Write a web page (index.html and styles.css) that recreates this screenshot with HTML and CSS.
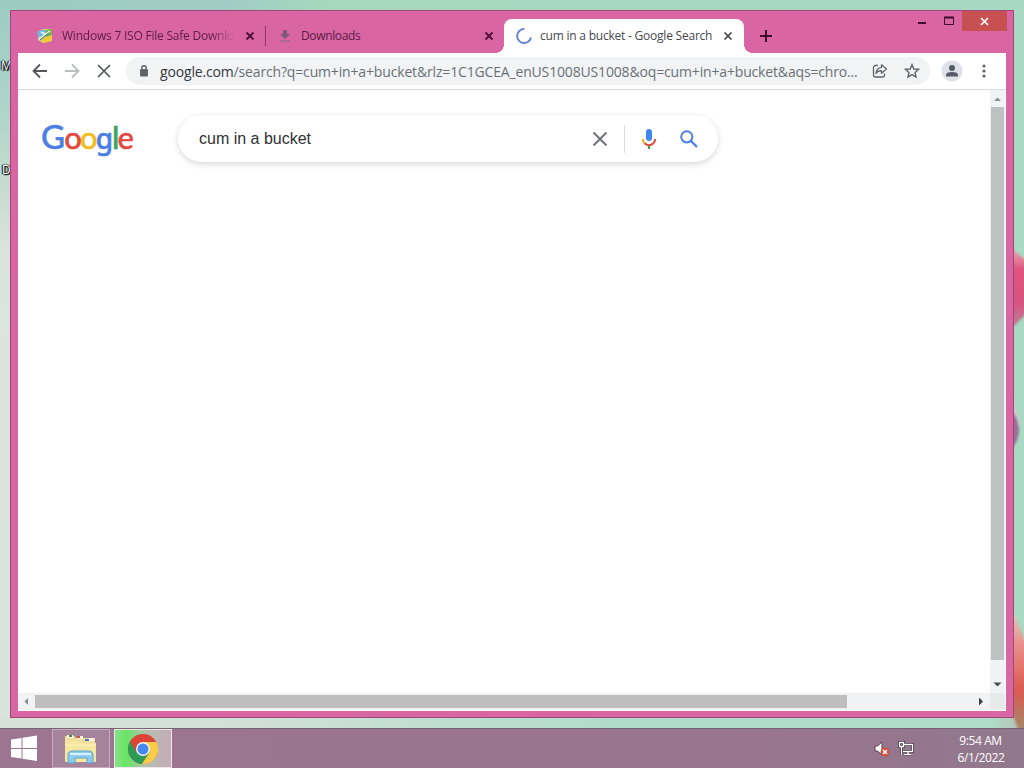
FILE: index.html
```html
<!DOCTYPE html>
<html lang="en">
<head>
    <meta charset="UTF-8" />
    <meta name="viewport" content="width=device-width, initial-scale=1.0" />
    <title>cum in a bucket - Google Search</title>
    <link rel="stylesheet" href="styles.css">
</head>
<body>
    <div class="desktop">
        <svg class="wallpaper" width="30" height="728" viewBox="0 0 30 728">
            <defs>
                <linearGradient id="petal" x1="0" y1="0" x2="0" y2="1">
                    <stop offset="0" stop-color="#e9b5b5"/>
                    <stop offset=".3" stop-color="#e0527f"/>
                    <stop offset=".7" stop-color="#d8527f"/>
                    <stop offset="1" stop-color="#b98096"/>
                </linearGradient>
                <linearGradient id="rose" x1="0" y1="0" x2="0" y2="1">
                    <stop offset="0" stop-color="#dcd5c8"/>
                    <stop offset=".3" stop-color="#ea8f8c"/>
                    <stop offset=".65" stop-color="#dc5a50"/>
                    <stop offset="1" stop-color="#9c8f6c"/>
                </linearGradient>
                <filter id="soft"><feGaussianBlur stdDeviation="1.2"/></filter>
            </defs>
            <g filter="url(#soft)">
                <path d="M16 246 Q24 254 34 262 V312 L20 326 H16Z" fill="url(#petal)"/>
                <path d="M18 400 Q25 410 27 425 H18Z" fill="#c4cfc8"/>
                <path d="M18 412 Q25 418 25 432 Q23 444 18 448Z" fill="#9a6f98"/>
                <path d="M16 606 Q24 620 34 650 V735 H26 L18 712Z" fill="url(#rose)"/>
            </g>
        </svg>
        <span class="icon-label label-one">M</span>
        <span class="icon-label label-two">D</span>

        <div class="window">
            <div class="window-buttons">
                <span class="win-btn"><svg width="10" height="10"><path d="M1 7H9" stroke="#3c0a2a" stroke-width="2"/></svg></span>
                <span class="win-btn"><svg width="12" height="10"><path d="M1.500 1V8.500H10.500V1" fill="none" stroke="#3c0a2a"/><path d="M1 1.500H11" stroke="#3c0a2a" stroke-width="2"/></svg></span>
                <span class="win-close"><svg width="9" height="9"><path d="M1 1L8 8M8 1L1 8" stroke="#fff" stroke-width="1.700"/></svg></span>
            </div>

            <div class="tabs">
                <div class="tab tab-first">
                    <svg class="favicon" width="16" height="16" viewBox="0 0 16 16">
                        <path d="M1 4Q5 0 12 1L15 3V13L6 15L1 12Z" fill="#d9d36a"/>
                        <path d="M0 4Q4 1 10 2L7 9L2 11Z" fill="#6fb8dd"/>
                        <path d="M6 8L14 6V13L7 15Z" fill="#f1c832"/>
                        <path d="M9 2L15 1V7L9 9Z" fill="#72b54c"/>
                        <path d="M2 11L13 3M4 4L8 6" stroke="#f8f8e4" stroke-width="1.500"/>
                        <path d="M3 12L12 5" stroke="#2d70a0"/>
                    </svg>
                    <span class="tab-title fade">Windows 7 ISO File Safe Downlo</span>
                    <svg class="tab-close" width="10" height="10"><path d="M1.500 1.500L8.500 8.500M8.500 1.500L1.500 8.500" stroke="#4a1238" stroke-width="1.800"/></svg>
                </div>
                <div class="tab tab-second">
                    <svg class="favicon" width="12" height="14" viewBox="0 0 12 14"><path d="M4 1H8V5H11L6 10L1 5H4Z" fill="#7c5a80"/><path d="M1 12H11" stroke="#9a6a94" stroke-width="1.500"/></svg>
                    <span class="tab-title downloads">Downloads</span>
                    <svg class="tab-close" width="10" height="10"><path d="M1.500 1.500L8.500 8.500M8.500 1.500L1.500 8.500" stroke="#4a1238" stroke-width="1.800"/></svg>
                </div>
                <div class="tab tab-active">
                    <svg class="favicon" width="16" height="16" viewBox="0 0 16 16"><path d="M8.500 1A7 7 0 1 0 15 9.500" fill="none" stroke="#6685d4" stroke-width="2"/></svg>
                    <span class="tab-title">cum in a bucket - Google Search</span>
                    <svg class="tab-close" width="10" height="10"><path d="M1.500 1.500L8.500 8.500M8.500 1.500L1.500 8.500" stroke="#3c4043" stroke-width="1.600"/></svg>
                </div>
                <svg class="new-tab" width="12" height="12"><path d="M6 0V12M0 6H12" stroke="#3c0a2a" stroke-width="2"/></svg>
            </div>

            <div class="client">
                <div class="toolbar">
                    <svg class="nav" width="16" height="16"><path d="M15 8H2M8 1.500L1.500 8L8 14.500" fill="none" stroke="#53565a" stroke-width="1.800"/></svg>
                    <svg class="nav" width="16" height="16"><path d="M1 8H14M8 1.500L14.500 8L8 14.500" fill="none" stroke="#babcbe" stroke-width="1.800"/></svg>
                    <svg class="nav" width="16" height="16"><path d="M2 2L14 14M14 2L2 14" stroke="#53565a" stroke-width="1.700"/></svg>
                    <div class="omnibox">
                        <svg width="10" height="12"><rect x="1" y="4" width="8" height="7.500" rx="1" fill="#5f6368"/><path d="M2.800 5V3A2.200 2.200 0 0 1 7.200 3V5" fill="none" stroke="#5f6368" stroke-width="1.400"/></svg>
                        <span class="url"><b>google.com</b>/search?q=cum+in+a+bucket&amp;rlz=1C1GCEA_enUS1008US1008&amp;oq=cum+in+a+bucket&amp;aqs=chro...</span>
                        <svg class="share" width="16" height="16" viewBox="0 0 16 16" fill="none" stroke="#5f6368" stroke-width="1.300"><path d="M6 2.500H3.500A2 2 0 0 0 1.500 4.500V12A2 2 0 0 0 3.500 14H10.500A2 2 0 0 0 12.500 12V10.500"/><path d="M9.500 1.800L14.500 6L9.500 10.200V7.800Q6 7.500 4 10.500Q4.500 5 9.500 4.300Z" stroke-linejoin="round"/></svg>
                        <svg width="16" height="16" viewBox="0 0 16 16"><path d="M8 1.700L9.800 6L14.500 6.400L11 9.500L12 14L8 11.600L4 14L5 9.500L1.500 6.400L6.200 6Z" fill="none" stroke="#5f6368" stroke-width="1.400"/></svg>
                    </div>
                    <svg class="avatar" width="22" height="22"><circle cx="11" cy="11" r="10.500" fill="#dfe1e8"/><circle cx="11" cy="8" r="3" fill="#565b68"/><path d="M5 16.500V15Q5 12 11 12T17 15V16.500Z" fill="#565b68"/></svg>
                    <svg class="menu" width="4" height="14" fill="#5f6368"><circle cx="2" cy="2" r="1.600"/><circle cx="2" cy="7" r="1.600"/><circle cx="2" cy="12" r="1.600"/></svg>
                </div>

                <div class="viewport">
                    <div class="page">
                        <div class="logo"><span class="blue big">G</span><span class="red">o</span><span class="yellow">o</span><span class="blue tail">g</span><span class="green">l</span><span class="red">e</span></div>
                        <div class="search-box">
                            <span class="query">cum in a bucket</span>
                            <svg width="16" height="16"><path d="M1.500 1.500L14.500 14.500M14.500 1.500L1.500 14.500" stroke="#70757a" stroke-width="2"/></svg>
                            <span class="divider"></span>
                            <svg class="mic" width="16" height="20" viewBox="0 0 16 20">
                                <rect x="5" y="0" width="6" height="12" rx="3" fill="#4285f4"/>
                                <path d="M7 16H9V20H7Z" fill="#34a853"/>
                                <path d="M1.700 10Q2 12.500 3.700 14.300" fill="none" stroke="#f4b400" stroke-width="2"/>
                                <path d="M3.600 14.200Q8 18.200 12.400 14.200Q14 12.500 14.300 10" fill="none" stroke="#dc4a3b" stroke-width="2"/>
                            </svg>
                            <svg width="18" height="18" viewBox="0 0 18 18"><circle cx="6.800" cy="6.800" r="5.600" fill="none" stroke="#4a7fe6" stroke-width="2"/><path d="M11 11L17 17" stroke="#4a7fe6" stroke-width="2.300"/></svg>
                        </div>
                    </div>
                    <div class="scroll-y">
                        <svg width="15" height="17"><path d="M4 11L7.500 7.500L11 11Z" fill="#8c8c8c"/></svg>
                        <span class="thumb-y"></span>
                        <svg class="arrow-down" width="15" height="17"><path d="M3.500 6.500H11.500L7.500 10.500Z" fill="#4a4a4a"/></svg>
                    </div>
                    <div class="scroll-x">
                        <svg width="17" height="15"><path d="M10 4V11L6.500 7.500Z" fill="#8c8c8c"/></svg>
                        <span class="thumb-x"></span>
                        <svg class="arrow-right" width="17" height="15"><path d="M7 3.500V11.500L11 7.500Z" fill="#3c3c3c"/></svg>
                    </div>
                    <div class="corner"></div>
                </div>
            </div>
        </div>
    </div>

    <div class="taskbar">
        <svg class="start" width="28" height="28" viewBox="0 0 28 28" fill="#fff"><path d="M1 4.500L11.500 3V13H1ZM12.500 2.800L27 0.500V13H12.500ZM1 14H11.500V23.500L1 22ZM12.500 14H27V26L12.500 23.800Z"/></svg>
        <div class="task">
            <svg width="34" height="32" viewBox="0 0 34 32">
                <path d="M1 3H10L12 5H31V28H1Z" fill="#f0dda0"/>
                <path d="M3 2H9V5H3ZM14 3H19V6H14ZM24 5H30V8H24Z" fill="#f8f4e4"/>
                <path d="M5 3H8" stroke="#3f8d55" stroke-width="2"/>
                <path d="M13 4H16" stroke="#c35b3a" stroke-width="2"/>
                <path d="M21 7H25" stroke="#4a78b8" stroke-width="2"/>
                <path d="M1 8H17L19 10H32V29H1Z" fill="#f6e69f"/>
                <path d="M1 12H32" stroke="#fff3bd"/>
                <path d="M4 30V22Q4 18 9 18H25Q29 18 29 22V30H23V25H11V30Z" fill="#8ccbed" stroke="#5ba5d2"/>
                <path d="M6 21H27" stroke="#d9f2ff" stroke-width="2"/>
            </svg>
        </div>
        <div class="task task-active">
            <svg width="30" height="30" viewBox="0 0 30 30">
                <circle cx="15" cy="15" r="15" fill="#db4437"/>
                <path d="M2 7.500A15 15 0 0 0 14 30L21.500 18.500L8.500 18.500Z" fill="#2b9b55"/>
                <path d="M15 8H28.300A15 15 0 0 1 14 30L21.500 18.500Z" fill="#fbcc45"/>
                <circle cx="15" cy="15" r="7" fill="#f3f3f3"/>
                <circle cx="15" cy="15" r="5.500" fill="#4688ef"/>
            </svg>
        </div>
        <div class="tray">
            <svg width="16" height="16" viewBox="0 0 16 16">
                <path d="M1 5H3.500L8 1V14L3.500 10H1Z" fill="#fff" stroke="#5b3f53"/>
                <circle cx="11" cy="11" r="4.500" fill="#d64b42"/>
                <path d="M9 9L13 13M13 9L9 13" stroke="#fff" stroke-width="1.500"/>
            </svg>
            <svg width="16" height="16" viewBox="0 0 16 16" fill="none">
                <path d="M6 3.500H14.500V10.500H5M10 11V13.500M6 13.500H13M1.500 1.500H5.500V5.500H1.500ZM3.500 6V14" stroke="#463344" stroke-width="3"/>
                <path d="M6 3.500H14.500V10.500H5M10 11V13.500M6 13.500H13M1.500 1.500H5.500V5.500H1.500ZM3.500 6V14" stroke="#fff" stroke-width="1.300"/>
            </svg>
            <div class="clock"><span class="time">9:54 AM</span><span class="date">6/1/2022</span></div>
        </div>
    </div>
</body>
</html>
```
FILE: styles.css
```css
html, body {
    height: 100%;
    margin: 0;
    overflow: hidden;
}

body {
    display: flex;
    flex-direction: column;
    font-family: "Open Sans", "Noto Sans", sans-serif;
}

svg, span {
    flex-shrink: 0;
}

.desktop {
    position: relative;
    height: 728px;
    flex-shrink: 0;
    background:
        linear-gradient(90deg, #d6e1da 0, #d0dfd7 25%, #b0dccb 60%, #aedbca 97%, #b9bdb0) 0 718px / 100% 10px no-repeat,
        linear-gradient(90deg, #9ccbc2 0, #a0cbc5 22%, #a6d8bd 32%, #a9d8c2) 0 0 / 100% 10px no-repeat,
        linear-gradient(#9ccbc2 0, #aed5c9 15%, #c3dacd 24%, #d9e4dd 35%, #dce3dd 50%, #d9e2dc) 0 0 / 12px 100% no-repeat,
        #a8d9c2;
}

.wallpaper {
    position: absolute;
    right: 0;
    top: 0;
}

.icon-label {
    position: absolute;
    left: 1px;
    font-size: 12px;
    line-height: 14px;
    color: #fff;
    text-shadow: 0 0 2px #000, 1px 1px 1px #000, -1px 0 1px #000, 1px 0 1px #000;
}

.label-one { top: 59px; }
.label-two { top: 163px; left: 2px; }

.window {
    position: absolute;
    left: 10px;
    top: 10px;
    width: 1004px;
    height: 708px;
    box-sizing: border-box;
    padding: 8px 7px 6px;
    border: 1px solid #9c4878;
    background: #d966a3;
}

.window-buttons {
    position: absolute;
    right: 6px;
    top: 0;
    display: flex;
    height: 20px;
}

.win-btn {
    width: 27px;
    display: flex;
    align-items: center;
    justify-content: center;
}

.win-close {
    width: 45px;
    display: flex;
    align-items: center;
    justify-content: center;
    background: #c75050;
}

/* TABS */
.tabs {
    display: flex;
    align-items: center;
    height: 34px;
}

.tab {
    display: flex;
    align-items: center;
    box-sizing: border-box;
    height: 34px;
    color: #5c1d45;
    font-size: 12px;
}

.tab-title {
    flex: 1;
    padding-bottom: 1px;
    white-space: nowrap;
    letter-spacing: -0.22px;
}

.tab-first {
    width: 247px;
    padding: 0 10px 0 19px;
}

.fade {
    min-width: 0;
    flex-shrink: 1;
    overflow: hidden;
    margin: 0 10px 0 9px;
    -webkit-mask-image: linear-gradient(90deg, #000 86%, transparent);
    mask-image: linear-gradient(90deg, #000 86%, transparent);
}

.tab-second {
    width: 239px;
    padding: 0 10px 0 14px;
    background: linear-gradient(#8b3868, #8b3868) 0 7px / 1px 20px no-repeat;
}

.downloads {
    margin-left: 10px;
    letter-spacing: -0.35px;
}

.tab-active {
    position: relative;
    width: 240px;
    padding: 0 11px 0 12px;
    border-radius: 8px 8px 0 0;
    background: #fff;
    color: #45484c;
}

.tab-active .tab-title {
    margin-left: 8px;
}

.tab-active::before,
.tab-active::after {
    content: "";
    position: absolute;
    bottom: 0;
    width: 8px;
    height: 8px;
}

.tab-active::before {
    left: -8px;
    background: radial-gradient(circle at 0 0, transparent 7.5px, #fff 8px);
}

.tab-active::after {
    right: -8px;
    background: radial-gradient(circle at 100% 0, transparent 7.5px, #fff 8px);
}

.new-tab {
    margin-left: 16px;
}

/* BROWSER */
.client {
    width: 988px;
    height: 658px;
    background: #fff;
}

.toolbar {
    display: flex;
    align-items: center;
    box-sizing: border-box;
    height: 37px;
    padding-left: 14px;
    border-bottom: 1px solid #d9dadc;
}

.nav {
    margin-right: 16px;
}

.omnibox {
    display: flex;
    align-items: center;
    box-sizing: border-box;
    width: 804px;
    height: 28px;
    padding: 0 10px 0 13px;
    margin-left: -2px;
    border-radius: 14px;
    background: #f1f3f4;
}

.url {
    flex: 1;
    margin-left: 11px;
    white-space: nowrap;
    font-size: 14px;
    letter-spacing: -0.16px;
    color: #6c7074;
}

.url b {
    font-weight: normal;
    color: #36393c;
}

.share {
    margin-right: 16px;
}

.avatar {
    margin-left: 11px;
}

.menu {
    margin-left: 19px;
}

.viewport {
    display: grid;
    grid-template-columns: 972px 15px;
    grid-template-rows: 603px 17px;
    height: 620px;
}

.page {
    display: flex;
    align-items: flex-start;
    padding: 25px 0 0 23px;
}

/* wordmark */
.logo {
    display: flex;
    align-items: baseline;
    width: 94px;
    height: 40px;
    margin-top: 1px;
    font-family: Lato, sans-serif;
    font-size: 31px;
    line-height: 40px;
    font-weight: 500;
    letter-spacing: -1.9px;
    -webkit-text-stroke: 0.5px;
}

.logo .big { font-size: 33px; letter-spacing: -0.8px; }
.logo .tail { font-family: "Noto Sans", sans-serif; font-size: 28px; letter-spacing: -1.2px; }
.blue { color: #4a7fe6; }
.red { color: #e2493f; }
.yellow { color: #f2bd1d; }
.green { color: #3ba45a; }

.search-box {
    display: flex;
    align-items: center;
    box-sizing: border-box;
    width: 540px;
    height: 47px;
    padding: 0 20px 0 21px;
    margin-left: 43px;
    border-radius: 24px;
    box-shadow: 0 2px 6px rgba(32, 33, 36, 0.18);
}

.query {
    flex: 1;
    font-family: "Liberation Sans", Arial, sans-serif;
    font-size: 16px;
    color: #303134;
}

.divider {
    width: 1px;
    height: 28px;
    margin: 0 16px;
    background: #dadce0;
}

.mic {
    margin-right: 23px;
}

/* SCROLLBARS */
.scroll-y {
    display: flex;
    flex-direction: column;
    align-items: center;
    background: #f1f2f3;
}

.thumb-y {
    width: 13px;
    height: 553px;
    background: #bfc0c0;
}

.arrow-down {
    margin-top: auto;
}

.scroll-x {
    display: flex;
    align-items: center;
    background: #f1f2f3;
}

.thumb-x {
    width: 812px;
    height: 13px;
    background: #bebebe;
}

.arrow-right {
    margin: 0 1px 0 auto;
}

.corner {
    background: #e8eaea;
}

/* TASKBAR */
.taskbar {
    display: flex;
    align-items: center;
    box-sizing: border-box;
    height: 40px;
    border-top: 1px solid #776471;
    background: linear-gradient(90deg, #9c7590, #9a758f 70%, #92788c);
    color: #fff;
}

.start {
    margin: 0 14px 0 10px;
}

.task {
    display: flex;
    align-items: center;
    justify-content: center;
    box-sizing: border-box;
    width: 58px;
    height: 39px;
    margin-right: 4px;
    border: 1px solid #c7a9bd;
    background: #a5839a;
}

.task-active {
    border-color: #efe6ec;
    background: linear-gradient(90deg, #84e287 0, #67e566 20%, #b6bfae 55%, #c3abb9);
}

.tray {
    display: flex;
    align-items: center;
    margin-left: auto;
    gap: 8px;
}

.clock {
    display: flex;
    flex-direction: column;
    align-items: center;
    width: 86px;
    margin-left: 16px;
    font-size: 12px;
    line-height: 17px;
    letter-spacing: -0.4px;
}

.time {
    padding-right: 1px;
}
```
